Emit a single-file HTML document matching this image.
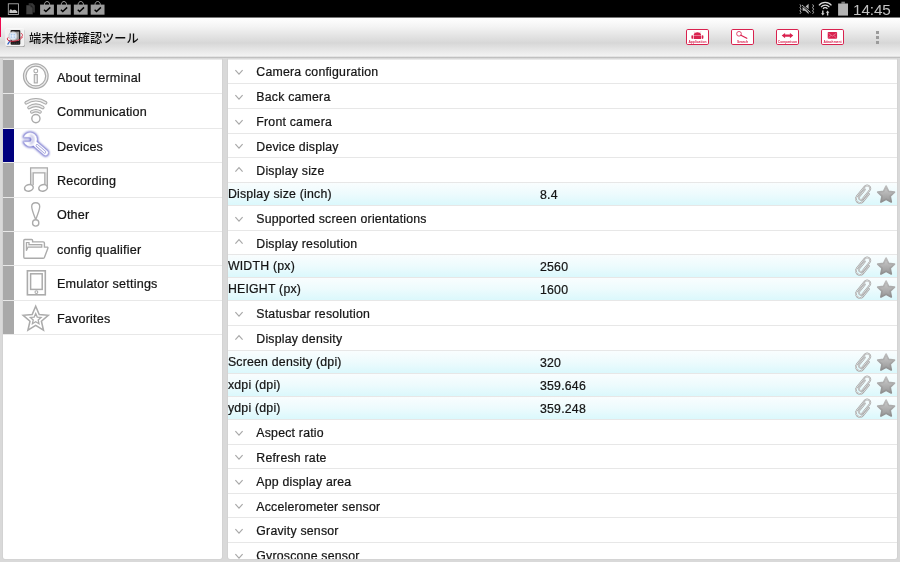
<!DOCTYPE html>
<html lang="ja"><head><meta charset="utf-8"><title>端末仕様確認ツール</title>
<style>
html,body{margin:0;padding:0}
body{width:900px;height:562px;position:relative;overflow:hidden;background:#d9d9d9;
 font-family:"Liberation Sans","Noto Sans CJK JP",sans-serif;color:#111}
#wrap{position:absolute;left:0;top:0;width:900px;height:562px;will-change:transform;overflow:hidden}
.abs{position:absolute}
.lrow .txt,.grow .txt,.drow .txt,.drow .val{-webkit-text-stroke:0.22px #151515}
#status{left:0;top:0;width:900px;height:18px;background:linear-gradient(to bottom,#000 0,#000 17px,#777 17px,#777 18px)}
#abar{left:0;top:18px;width:900px;height:38.6px;
 background:linear-gradient(to bottom,#ffffff 0%,#f4f4f4 22%,#d7d7d7 64%,#e3e3e3 78%,#f5f5f5 100%)}
#abline{left:0;top:56px;width:900px;height:2px;
 background:linear-gradient(to bottom,#efefef 0%,#dcdcdc 40%,#bebebe 78%,#c4c4c4 100%)}
.cap{position:absolute;top:58px;height:2px;background:linear-gradient(to bottom,#d0d0d0,#f2f2f2)}
#redstripe{left:0;top:17.4px;width:1.2px;height:19.4px;background:#ee0a50}
#title{left:29.0px;top:30.3px;font-size:12.2px;line-height:18px;color:#0c0c0c;white-space:nowrap;font-weight:500}
#clock{left:853.1px;top:1px;font-size:15.3px;line-height:17px;color:#c2c2c2;white-space:nowrap;letter-spacing:-0.15px}
#left{left:3px;top:59.4px;width:219.4px;height:499.4px;background:#fff;border-radius:0 0 2px 2px;overflow:hidden;box-shadow:0 0 0 0.6px #cfcfcf}
#right{left:227.8px;top:59.2px;width:669.6px;height:499.6px;background:#fff;border-radius:0 0 2px 2px;overflow:hidden;box-shadow:0 0 0 0.6px #cfcfcf}
.lrow{position:absolute;left:0;width:219.4px;height:34.4px}
.lrow .bar{position:absolute;left:0;top:0;width:10.9px;height:34.6px;background:#a9a9a9}
.lrow.sel .bar{background:#00007e}
.ldiv{position:absolute;left:0;width:219.4px;height:1px;background:#e8e8e8}
.lrow .txt{position:absolute;left:53.9px;top:9.5px;font-size:12.6px;line-height:18px;letter-spacing:0.2px;white-space:nowrap;color:#151515}
.grow{position:absolute;left:0;width:669.6px}
.rdiv{position:absolute;left:0;width:669.6px;height:1px;background:#e7e7e7}
.grow .txt{position:absolute;left:28.5px;font-size:12.3px;line-height:18px;letter-spacing:0.22px;white-space:nowrap;color:#151515}
.drow{position:absolute;left:0;width:669.6px;background:linear-gradient(to bottom,#f9fdfe 0%,#edfbfd 50%,#dbf8fc 100%)}
.drow .txt{position:absolute;left:0.1px;font-size:12.3px;line-height:18px;letter-spacing:0.22px;white-space:nowrap;color:#151515}
.drow .val{position:absolute;left:312.2px;font-size:12.3px;line-height:18px;letter-spacing:0.22px;white-space:nowrap;color:#151515}
.ibox{position:absolute;top:29.2px;width:20.9px;height:13.7px;border:1px solid #d9224f;border-radius:1.8px;background:#fff}
.ibox .t{position:absolute;left:-4px;right:-4px;top:9.7px;text-align:center;font-size:3.3px;line-height:4px;font-weight:bold;color:#d9224f;white-space:nowrap}
svg{position:absolute;overflow:visible}
</style></head>
<body><div id="wrap">
<div id="status" class="abs"></div>
<svg class="abs" style="left:0;top:0" width="900" height="18" viewBox="0 0 900 18"><rect x="8.3" y="3.8" width="10.2" height="10.7" fill="#000" stroke="#b4b4b4" stroke-width="0.85"/><path d="M9.4 12.9 L9.4 10.8 L10.8 9 L11.8 10 L12.6 10.6 L14 9.8 L15.6 10 L17.3 11.4 L17.3 12.9 Z" fill="#c4c4c4"/><path d="M28.7 3.2 L32.6 3.2 L34.8 5.4 L34.8 12.4 L28.7 12.4 Z" fill="#383838"/><path d="M26.1 5.1 L30.6 5.1 L32.9 7.3 L32.9 14.6 L26.1 14.6 Z" fill="#444" stroke="#000" stroke-width="0.4"/><path d="M30.6 5.1 L30.6 7.3 L32.9 7.3 Z" fill="#222"/><rect x="40.10" y="4.6" width="13.8" height="10.1" fill="#9c9c9c"/><path d="M44.40 4.8 C44.40 0.4 49.70 0.4 49.70 4.8" fill="none" stroke="#c9c9c9" stroke-width="0.8"/><path d="M44.00 9.7 L45.90 11.5 L50.30 7.4" fill="none" stroke="#000" stroke-width="1.45"/><rect x="56.97" y="4.6" width="13.8" height="10.1" fill="#9c9c9c"/><path d="M61.27 4.8 C61.27 0.4 66.57 0.4 66.57 4.8" fill="none" stroke="#c9c9c9" stroke-width="0.8"/><path d="M60.87 9.7 L62.77 11.5 L67.17 7.4" fill="none" stroke="#000" stroke-width="1.45"/><rect x="73.84" y="4.6" width="13.8" height="10.1" fill="#9c9c9c"/><path d="M78.14 4.8 C78.14 0.4 83.44 0.4 83.44 4.8" fill="none" stroke="#c9c9c9" stroke-width="0.8"/><path d="M77.74 9.7 L79.64 11.5 L84.04 7.4" fill="none" stroke="#000" stroke-width="1.45"/><rect x="90.71" y="4.6" width="13.8" height="10.1" fill="#9c9c9c"/><path d="M95.01 4.8 C95.01 0.4 100.31 0.4 100.31 4.8" fill="none" stroke="#c9c9c9" stroke-width="0.8"/><path d="M94.61 9.7 L96.51 11.5 L100.91 7.4" fill="none" stroke="#000" stroke-width="1.45"/><path d="M802.6 7 L805 7 L808.6 3.8 L808.6 14 L805 10.8 L802.6 10.8 Z" fill="#b9b9b9"/><path d="M801.8 4.6 L811 12.6" stroke="#000" stroke-width="2.2"/><path d="M802 5 L810.6 12.4" stroke="#c4c4c4" stroke-width="0.9"/><path d="M800 4.4 L801 6 L800 7.6 L801 9.2 L800 10.8 L801 12.4 L800 13.8" fill="none" stroke="#c2c2c2" stroke-width="0.9"/><path d="M812.6 4.4 L813.6 6 L812.6 7.6 L813.6 9.2 L812.6 10.8 L813.6 12.4 L812.6 13.8" fill="none" stroke="#c2c2c2" stroke-width="0.9"/><path d="M818.92 5.33 A8.2 8.2 0 0 1 831.48 5.33" fill="none" stroke="#dcdcdc" stroke-width="1.25"/><path d="M820.99 7.06 A5.5 5.5 0 0 1 829.41 7.06" fill="none" stroke="#dcdcdc" stroke-width="1.2"/><path d="M822.98 8.74 A2.9 2.9 0 0 1 827.42 8.74" fill="none" stroke="#dcdcdc" stroke-width="1.2"/><path d="M822.1 10.6 L823.5 10.6 L823.5 13.2 L824.6 13.2 L822.8 15.6 L821 13.2 L822.1 13.2 Z" fill="#cfcfcf"/><path d="M826.9 15.4 L828.3 15.4 L828.3 12.8 L829.4 12.8 L827.6 10.4 L825.8 12.8 L826.9 12.8 Z" fill="#cfcfcf"/><rect x="841.4" y="1.7" width="3.5" height="2" fill="#7d7d7d"/><rect x="838.1" y="3.5" width="9.9" height="12.1" fill="#b3b3b3"/></svg>
<div id="clock" class="abs">14:45</div>
<div id="abar" class="abs"></div><div id="abline" class="abs"></div><div id="redstripe" class="abs"></div>
<svg class="abs" style="left:0;top:20px" width="30" height="32" viewBox="0 20 30 32"><defs><filter id="sh" x="-20%" y="-20%" width="140%" height="150%"><feGaussianBlur stdDeviation="0.55"/></filter></defs><rect x="6.2" y="29.3" width="18.5" height="17.8" rx="1.6" fill="#8e8e8e" filter="url(#sh)"/><rect x="5.8" y="28.4" width="18.4" height="17.7" rx="1.6" fill="#f1f1f1" stroke="#fdfdfd" stroke-width="0.6"/><rect x="10.6" y="30" width="9.7" height="14.8" rx="1.1" fill="#1b1b1b"/><rect x="11.8" y="31.6" width="7.3" height="9.4" fill="#9a9a9a"/><path d="M12 43.2 L19 43.2" stroke="#555" stroke-width="0.6" stroke-dasharray="1.4 0.6"/><path d="M20.4 37.4 C23.2 36.8 23 33.6 20.8 33.3" fill="none" stroke="#d4203a" stroke-width="0.85"/><circle cx="12.9" cy="35.9" r="4" fill="#dbe8f6" stroke="#cdcdcd" stroke-width="1.05"/><path d="M10.9 34.2 L14.9 37.6 M14.9 34.2 L10.9 37.6" stroke="#a9c7ec" stroke-width="1.1"/><circle cx="12.9" cy="35.9" r="1" fill="#f4f8fc"/><path d="M10.3 40.4 L7.6 44.5" stroke="#2a5cc0" stroke-width="1.3"/><path d="M8.2 37.4 C5.8 39.3 8.4 41.7 13.4 41.3 C17.6 40.9 21.8 39.1 22.4 36.8" fill="none" stroke="#d4203a" stroke-width="0.95"/></svg><svg class="abs" width="0" height="0" style="left:0;top:0"><defs><linearGradient id="sg" x1="0" y1="0" x2="0" y2="1"><stop offset="0" stop-color="#cdcdcd"/><stop offset="1" stop-color="#969696"/></linearGradient><linearGradient id="sg2" x1="0" y1="0" x2="0" y2="1"><stop offset="0" stop-color="#bdbdbd"/><stop offset="1" stop-color="#8e8e8e"/></linearGradient></defs></svg>
<div id="title" class="abs">端末仕様確認ツール</div>
<div class="ibox" style="left:686.0px"><svg style="left:0;top:0" width="22" height="15" viewBox="0.5 0.3 22 15"><path d="M7.2 5.2 C7.2 1.6 14.6 1.6 14.6 5.2 Z" fill="#d9224f"/><path d="M8.3 2.9 L7.6 2 M13.5 2.9 L14.2 2" stroke="#d9224f" stroke-width="0.5"/><rect x="7.2" y="5.7" width="7.4" height="3.6" fill="#d9224f"/><rect x="4.9" y="5.6" width="1.7" height="3.6" rx="0.8" fill="#d9224f"/><rect x="15.2" y="5.6" width="1.7" height="3.6" rx="0.8" fill="#d9224f"/></svg><div class="t">Application</div></div><div class="ibox" style="left:731.0px"><svg style="left:0;top:0" width="22" height="15" viewBox="0.5 0.3 22 15"><circle cx="7.5" cy="4.1" r="2.35" fill="none" stroke="#d9224f" stroke-width="0.8"/><path d="M9.4 5.5 L15.3 8.6" stroke="#d9224f" stroke-width="1.25" stroke-linecap="round"/></svg><div class="t">Search</div></div><div class="ibox" style="left:776.0px"><svg style="left:0;top:0" width="22" height="15" viewBox="0.5 0.3 22 15"><path d="M5.2 5.9 L8.6 3.3 L8.6 4.8 L13.4 4.8 L13.4 3.3 L16.8 5.9 L13.4 8.5 L13.4 7 L8.6 7 L8.6 8.5 Z" fill="#d9224f"/></svg><div class="t">Comparison</div></div><div class="ibox" style="left:821.0px"><svg style="left:0;top:0" width="22" height="15" viewBox="0.5 0.3 22 15"><rect x="6.2" y="2.2" width="9.4" height="6.8" rx="0.9" fill="#d9224f"/><path d="M7 3.6 L10.9 6.4 L14.8 3.6 M7 8 L9.6 5.7 M14.8 8 L12.2 5.7" fill="none" stroke="#f6c9d3" stroke-width="0.45"/></svg><div class="t">Attachment</div></div><div class="abs" style="left:875.8px;top:30.5px;width:3.3px;height:3.1px;background:#9b9b9b"></div><div class="abs" style="left:875.8px;top:35.7px;width:3.3px;height:3.1px;background:#9b9b9b"></div><div class="abs" style="left:875.8px;top:40.9px;width:3.3px;height:3.1px;background:#9b9b9b"></div>
<div id="left" class="abs">
<div class="lrow" style="top:0.00px"><div class="bar"></div><div class="txt">About terminal</div></div>
<div class="lrow" style="top:34.40px"><div class="bar"></div><div class="txt">Communication</div></div>
<div class="lrow sel" style="top:68.80px"><div class="bar"></div><div class="txt">Devices</div></div>
<div class="lrow" style="top:103.20px"><div class="bar"></div><div class="txt">Recording</div></div>
<div class="lrow" style="top:137.60px"><div class="bar"></div><div class="txt">Other</div></div>
<div class="lrow" style="top:172.00px"><div class="bar"></div><div class="txt">config qualifier</div></div>
<div class="lrow" style="top:206.40px"><div class="bar"></div><div class="txt">Emulator settings</div></div>
<div class="lrow" style="top:240.80px"><div class="bar"></div><div class="txt">Favorites</div></div>
<div class="ldiv" style="top:33.6px"></div>
<div class="ldiv" style="top:68.6px"></div>
<div class="ldiv" style="top:102.6px"></div>
<div class="ldiv" style="top:137.6px"></div>
<div class="ldiv" style="top:171.6px"></div>
<div class="ldiv" style="top:205.6px"></div>
<div class="ldiv" style="top:240.6px"></div>
<div class="ldiv" style="top:274.6px"></div>
<svg class="abs" style="left:0;top:0" width="219" height="300" viewBox="3.0 59.4 219 300"><defs><filter id="glow" x="-30%" y="-30%" width="160%" height="160%"><feGaussianBlur stdDeviation="1.15"/></filter><filter id="glow2" x="-50%" y="-50%" width="200%" height="200%"><feGaussianBlur stdDeviation="0.9"/></filter></defs><circle cx="35.8" cy="76.5" r="12.3" fill="#ededed" stroke="#ababab" stroke-width="1.25"/><circle cx="35.8" cy="76.5" r="9.9" fill="#fff" stroke="#ababab" stroke-width="1.25"/><circle cx="35.8" cy="71.3" r="1.9" fill="#fff" stroke="#ababab" stroke-width="1.15"/><rect x="34.3" y="75" width="3" height="8.3" fill="#eee" stroke="#ababab" stroke-width="1.15"/><path d="M26.21 103.21 A16.9 16.9 0 0 1 45.59 103.21" fill="none" stroke="#ababab" stroke-width="3.7" stroke-linecap="round"/><path d="M26.21 103.21 A16.9 16.9 0 0 1 45.59 103.21" fill="none" stroke="#ededed" stroke-width="1.5" stroke-linecap="round"/><path d="M29.04 107.88 A12.6 12.6 0 0 1 42.76 107.88" fill="none" stroke="#ababab" stroke-width="3.7" stroke-linecap="round"/><path d="M29.04 107.88 A12.6 12.6 0 0 1 42.76 107.88" fill="none" stroke="#ededed" stroke-width="1.5" stroke-linecap="round"/><path d="M31.73 112.31 A8.1 8.1 0 0 1 40.07 112.31" fill="none" stroke="#ababab" stroke-width="3.5" stroke-linecap="round"/><path d="M31.73 112.31 A8.1 8.1 0 0 1 40.07 112.31" fill="none" stroke="#ededed" stroke-width="1.4" stroke-linecap="round"/><circle cx="35.9" cy="119.0" r="4.1" fill="#fff" stroke="#ababab" stroke-width="1.4"/><path d="M23.69 137.60 A6.9 6.9 0 1 1 36.73 142.13 L47.23 151.26 A2.6 2.6 0 0 1 43.81 155.18 L33.32 146.06 A6.9 6.9 0 0 1 23.69 142.20 L29.2 142.20 A2.3 2.3 0 0 0 29.2 137.60 Z" fill="#5656c2" stroke="#5656c2" stroke-width="2.2" stroke-linejoin="round" filter="url(#glow)" opacity="0.95"/><path d="M23.69 137.60 A6.9 6.9 0 1 1 36.73 142.13 L47.23 151.26 A2.6 2.6 0 0 1 43.81 155.18 L33.32 146.06 A6.9 6.9 0 0 1 23.69 142.20 L29.2 142.20 A2.3 2.3 0 0 0 29.2 137.60 Z" fill="#fff" stroke="#c3c3ea" stroke-width="0.5"/><path d="M29.80 135.60 A4.4 4.4 0 0 1 29.80 144.20" fill="none" stroke="#8080cc" stroke-width="2.2" filter="url(#glow2)" opacity="0.5"/><path d="M37.14 145.94 L44.69 152.50" stroke="#9a9ad8" stroke-width="2.9" stroke-linecap="round"/><path d="M37.14 145.94 L44.69 152.50" stroke="#fff" stroke-width="1.5" stroke-linecap="round"/><path d="M30.9 168.7 L47.1 168.7 L47.1 186 L45.2 186 L45.2 172.9 L32.8 172.9 L32.8 186 L30.9 186 Z" fill="#e2e2e2"/><rect x="31" y="168.8" width="16" height="4" fill="#f6f6f6"/><path d="M30.6 186.4 L30.6 168.4 L47.4 168.4 L47.4 187" fill="none" stroke="#ababab" stroke-width="1.25"/><path d="M33.2 185.6 L33.2 173.4 L44.8 173.4 L44.8 185.6" fill="none" stroke="#ababab" stroke-width="1.25"/><ellipse cx="28.9" cy="188.3" rx="4.4" ry="3.2" fill="#fff" stroke="#ababab" stroke-width="1.5" transform="rotate(-14 28.9 188.3)"/><ellipse cx="43.1" cy="188.3" rx="4.4" ry="3.2" fill="#fff" stroke="#ababab" stroke-width="1.5" transform="rotate(-14 43.1 188.3)"/><path d="M35.7 220 C33.6 214.6 31.7 210.2 31.7 207 C31.7 204.4 33.4 203.1 35.7 203.1 C38 203.1 39.7 204.4 39.7 207 C39.7 210.2 37.8 214.6 35.7 220 Z" fill="#fff" stroke="#ababab" stroke-width="1.35"/><circle cx="35.7" cy="223.3" r="3.15" fill="#fff" stroke="#ababab" stroke-width="1.35"/><g transform="translate(0 0.5)"><path d="M23.8 257 L23.8 240.4 Q23.8 239.4 24.8 239.4 L31.6 239.4 Q32.6 239.4 32.6 240.4 L32.6 241.8 L43.2 241.8 Q44.4 241.8 44.4 243 L44.4 247 L47.6 247 Q48.2 247.4 47.8 248.4 L44.4 257.4 Q44 258.2 43 258.2 L24.8 258.2 Q23.8 258.2 23.8 257 Z" fill="#fff" stroke="#ababab" stroke-width="1.4"/><path d="M26.4 250.6 L26.4 242.4 L29 242.4 L29 244.6 L41.8 244.6 L41.8 247 L28 247 Z" fill="#f2f2f2" stroke="#ababab" stroke-width="1.2"/></g><rect x="27.4" y="271.2" width="17.9" height="24" fill="#fff" stroke="#ababab" stroke-width="1.6"/><rect x="30.6" y="274.2" width="11.6" height="15.6" fill="#fff" stroke="#ababab" stroke-width="1.5"/><circle cx="36.4" cy="292.5" r="1.4" fill="#fff" stroke="#ababab" stroke-width="1.1"/><polygon points="35.70,306.60 39.23,314.95 48.25,315.72 41.41,321.65 43.46,330.48 35.70,325.80 27.94,330.48 29.99,321.65 23.15,315.72 32.17,314.95" fill="#fff" stroke="#ababab" stroke-width="1.55"/><polygon points="35.70,314.00 37.23,317.50 41.03,317.87 38.17,320.40 38.99,324.13 35.70,322.20 32.41,324.13 33.23,320.40 30.37,317.87 34.17,317.50" fill="#fff" stroke="#ababab" stroke-width="1.3"/></svg>
</div>
<div id="right" class="abs">
<div class="grow" style="top:0.00px;height:23.80px"><svg style="left:7.3px;top:12.75px" width="8" height="1"><path d="M0.4 -1.9 L4 2.1 L7.6 -1.9" fill="none" stroke="#a9a9a9" stroke-width="1.2"/></svg><div class="txt" style="top:3.95px">Camera configuration</div></div>
<div class="grow" style="top:24.80px;height:24.00px"><svg style="left:7.3px;top:12.85px" width="8" height="1"><path d="M0.4 -1.9 L4 2.1 L7.6 -1.9" fill="none" stroke="#a9a9a9" stroke-width="1.2"/></svg><div class="txt" style="top:4.05px">Back camera</div></div>
<div class="rdiv" style="top:23.80px"></div>
<div class="grow" style="top:49.80px;height:24.00px"><svg style="left:7.3px;top:12.85px" width="8" height="1"><path d="M0.4 -1.9 L4 2.1 L7.6 -1.9" fill="none" stroke="#a9a9a9" stroke-width="1.2"/></svg><div class="txt" style="top:4.05px">Front camera</div></div>
<div class="rdiv" style="top:48.80px"></div>
<div class="grow" style="top:74.80px;height:23.00px"><svg style="left:7.3px;top:12.35px" width="8" height="1"><path d="M0.4 -1.9 L4 2.1 L7.6 -1.9" fill="none" stroke="#a9a9a9" stroke-width="1.2"/></svg><div class="txt" style="top:3.55px">Device display</div></div>
<div class="rdiv" style="top:73.80px"></div>
<div class="grow" style="top:98.80px;height:24.00px"><svg style="left:7.3px;top:12.85px" width="8" height="1"><path d="M0.4 0.7 L4 -3.3 L7.6 0.7" fill="none" stroke="#a9a9a9" stroke-width="1.2"/></svg><div class="txt" style="top:4.05px">Display size</div></div>
<div class="rdiv" style="top:97.80px"></div>
<div class="drow" style="top:123.80px;height:22.00px"><div class="txt" style="top:1.85px">Display size (inch)</div><div class="val" style="top:3.35px">8.4</div><svg style="left:624.20px;top:0" width="46" height="22.00" viewBox="852 0 46 22.00"><g transform="translate(863.7 11.20) rotate(-51)"><path d="M3.6 4 L-6 4 A4 4 0 0 1 -6 -4 L6.5 -4 A3.1 3.1 0 0 1 6.5 2.2 L-4.5 2.2 A2.1 2.1 0 0 1 -4.5 -2 L4.5 -2" fill="none" stroke="#9c9c9c" stroke-width="1.7" stroke-linecap="round"/><path d="M3.6 4 L-6 4 A4 4 0 0 1 -6 -4 L6.5 -4 A3.1 3.1 0 0 1 6.5 2.2 L-4.5 2.2 A2.1 2.1 0 0 1 -4.5 -2 L4.5 -2" fill="none" stroke="#f4f4f4" stroke-width="0.65" stroke-linecap="round"/></g><polygon points="886.10,3.10 888.63,8.42 894.47,9.18 890.19,13.23 891.27,19.02 886.10,16.20 880.93,19.02 882.01,13.23 877.73,9.18 883.57,8.42" fill="url(#sg)" stroke="url(#sg2)" stroke-width="1.7" stroke-linejoin="round"/></svg></div>
<div class="rdiv" style="top:122.80px"></div>
<div class="grow" style="top:146.80px;height:24.00px"><svg style="left:7.3px;top:12.85px" width="8" height="1"><path d="M0.4 -1.9 L4 2.1 L7.6 -1.9" fill="none" stroke="#a9a9a9" stroke-width="1.2"/></svg><div class="txt" style="top:4.05px">Supported screen orientations</div></div>
<div class="rdiv" style="top:145.80px"></div>
<div class="grow" style="top:171.80px;height:23.00px"><svg style="left:7.3px;top:12.35px" width="8" height="1"><path d="M0.4 0.7 L4 -3.3 L7.6 0.7" fill="none" stroke="#a9a9a9" stroke-width="1.2"/></svg><div class="txt" style="top:3.55px">Display resolution</div></div>
<div class="rdiv" style="top:170.80px"></div>
<div class="drow" style="top:195.80px;height:22.00px"><div class="txt" style="top:1.85px">WIDTH (px)</div><div class="val" style="top:3.35px">2560</div><svg style="left:624.20px;top:0" width="46" height="22.00" viewBox="852 0 46 22.00"><g transform="translate(863.7 11.20) rotate(-51)"><path d="M3.6 4 L-6 4 A4 4 0 0 1 -6 -4 L6.5 -4 A3.1 3.1 0 0 1 6.5 2.2 L-4.5 2.2 A2.1 2.1 0 0 1 -4.5 -2 L4.5 -2" fill="none" stroke="#9c9c9c" stroke-width="1.7" stroke-linecap="round"/><path d="M3.6 4 L-6 4 A4 4 0 0 1 -6 -4 L6.5 -4 A3.1 3.1 0 0 1 6.5 2.2 L-4.5 2.2 A2.1 2.1 0 0 1 -4.5 -2 L4.5 -2" fill="none" stroke="#f4f4f4" stroke-width="0.65" stroke-linecap="round"/></g><polygon points="886.10,3.10 888.63,8.42 894.47,9.18 890.19,13.23 891.27,19.02 886.10,16.20 880.93,19.02 882.01,13.23 877.73,9.18 883.57,8.42" fill="url(#sg)" stroke="url(#sg2)" stroke-width="1.7" stroke-linejoin="round"/></svg></div>
<div class="rdiv" style="top:194.80px"></div>
<div class="drow" style="top:218.80px;height:22.00px"><div class="txt" style="top:1.85px">HEIGHT (px)</div><div class="val" style="top:3.35px">1600</div><svg style="left:624.20px;top:0" width="46" height="22.00" viewBox="852 0 46 22.00"><g transform="translate(863.7 11.20) rotate(-51)"><path d="M3.6 4 L-6 4 A4 4 0 0 1 -6 -4 L6.5 -4 A3.1 3.1 0 0 1 6.5 2.2 L-4.5 2.2 A2.1 2.1 0 0 1 -4.5 -2 L4.5 -2" fill="none" stroke="#9c9c9c" stroke-width="1.7" stroke-linecap="round"/><path d="M3.6 4 L-6 4 A4 4 0 0 1 -6 -4 L6.5 -4 A3.1 3.1 0 0 1 6.5 2.2 L-4.5 2.2 A2.1 2.1 0 0 1 -4.5 -2 L4.5 -2" fill="none" stroke="#f4f4f4" stroke-width="0.65" stroke-linecap="round"/></g><polygon points="886.10,3.10 888.63,8.42 894.47,9.18 890.19,13.23 891.27,19.02 886.10,16.20 880.93,19.02 882.01,13.23 877.73,9.18 883.57,8.42" fill="url(#sg)" stroke="url(#sg2)" stroke-width="1.7" stroke-linejoin="round"/></svg></div>
<div class="rdiv" style="top:217.80px"></div>
<div class="grow" style="top:241.80px;height:24.00px"><svg style="left:7.3px;top:12.85px" width="8" height="1"><path d="M0.4 -1.9 L4 2.1 L7.6 -1.9" fill="none" stroke="#a9a9a9" stroke-width="1.2"/></svg><div class="txt" style="top:4.05px">Statusbar resolution</div></div>
<div class="rdiv" style="top:240.80px"></div>
<div class="grow" style="top:266.80px;height:24.00px"><svg style="left:7.3px;top:12.85px" width="8" height="1"><path d="M0.4 0.7 L4 -3.3 L7.6 0.7" fill="none" stroke="#a9a9a9" stroke-width="1.2"/></svg><div class="txt" style="top:4.05px">Display density</div></div>
<div class="rdiv" style="top:265.80px"></div>
<div class="drow" style="top:291.80px;height:22.00px"><div class="txt" style="top:1.85px">Screen density (dpi)</div><div class="val" style="top:3.35px">320</div><svg style="left:624.20px;top:0" width="46" height="22.00" viewBox="852 0 46 22.00"><g transform="translate(863.7 11.20) rotate(-51)"><path d="M3.6 4 L-6 4 A4 4 0 0 1 -6 -4 L6.5 -4 A3.1 3.1 0 0 1 6.5 2.2 L-4.5 2.2 A2.1 2.1 0 0 1 -4.5 -2 L4.5 -2" fill="none" stroke="#9c9c9c" stroke-width="1.7" stroke-linecap="round"/><path d="M3.6 4 L-6 4 A4 4 0 0 1 -6 -4 L6.5 -4 A3.1 3.1 0 0 1 6.5 2.2 L-4.5 2.2 A2.1 2.1 0 0 1 -4.5 -2 L4.5 -2" fill="none" stroke="#f4f4f4" stroke-width="0.65" stroke-linecap="round"/></g><polygon points="886.10,3.10 888.63,8.42 894.47,9.18 890.19,13.23 891.27,19.02 886.10,16.20 880.93,19.02 882.01,13.23 877.73,9.18 883.57,8.42" fill="url(#sg)" stroke="url(#sg2)" stroke-width="1.7" stroke-linejoin="round"/></svg></div>
<div class="rdiv" style="top:290.80px"></div>
<div class="drow" style="top:314.80px;height:22.00px"><div class="txt" style="top:1.85px">xdpi (dpi)</div><div class="val" style="top:3.35px">359.646</div><svg style="left:624.20px;top:0" width="46" height="22.00" viewBox="852 0 46 22.00"><g transform="translate(863.7 11.20) rotate(-51)"><path d="M3.6 4 L-6 4 A4 4 0 0 1 -6 -4 L6.5 -4 A3.1 3.1 0 0 1 6.5 2.2 L-4.5 2.2 A2.1 2.1 0 0 1 -4.5 -2 L4.5 -2" fill="none" stroke="#9c9c9c" stroke-width="1.7" stroke-linecap="round"/><path d="M3.6 4 L-6 4 A4 4 0 0 1 -6 -4 L6.5 -4 A3.1 3.1 0 0 1 6.5 2.2 L-4.5 2.2 A2.1 2.1 0 0 1 -4.5 -2 L4.5 -2" fill="none" stroke="#f4f4f4" stroke-width="0.65" stroke-linecap="round"/></g><polygon points="886.10,3.10 888.63,8.42 894.47,9.18 890.19,13.23 891.27,19.02 886.10,16.20 880.93,19.02 882.01,13.23 877.73,9.18 883.57,8.42" fill="url(#sg)" stroke="url(#sg2)" stroke-width="1.7" stroke-linejoin="round"/></svg></div>
<div class="rdiv" style="top:313.80px"></div>
<div class="drow" style="top:337.80px;height:22.00px"><div class="txt" style="top:1.85px">ydpi (dpi)</div><div class="val" style="top:3.35px">359.248</div><svg style="left:624.20px;top:0" width="46" height="22.00" viewBox="852 0 46 22.00"><g transform="translate(863.7 11.20) rotate(-51)"><path d="M3.6 4 L-6 4 A4 4 0 0 1 -6 -4 L6.5 -4 A3.1 3.1 0 0 1 6.5 2.2 L-4.5 2.2 A2.1 2.1 0 0 1 -4.5 -2 L4.5 -2" fill="none" stroke="#9c9c9c" stroke-width="1.7" stroke-linecap="round"/><path d="M3.6 4 L-6 4 A4 4 0 0 1 -6 -4 L6.5 -4 A3.1 3.1 0 0 1 6.5 2.2 L-4.5 2.2 A2.1 2.1 0 0 1 -4.5 -2 L4.5 -2" fill="none" stroke="#f4f4f4" stroke-width="0.65" stroke-linecap="round"/></g><polygon points="886.10,3.10 888.63,8.42 894.47,9.18 890.19,13.23 891.27,19.02 886.10,16.20 880.93,19.02 882.01,13.23 877.73,9.18 883.57,8.42" fill="url(#sg)" stroke="url(#sg2)" stroke-width="1.7" stroke-linejoin="round"/></svg></div>
<div class="rdiv" style="top:336.80px"></div>
<div class="grow" style="top:360.80px;height:24.00px"><svg style="left:7.3px;top:12.85px" width="8" height="1"><path d="M0.4 -1.9 L4 2.1 L7.6 -1.9" fill="none" stroke="#a9a9a9" stroke-width="1.2"/></svg><div class="txt" style="top:4.05px">Aspect ratio</div></div>
<div class="rdiv" style="top:359.80px"></div>
<div class="grow" style="top:385.80px;height:23.00px"><svg style="left:7.3px;top:12.35px" width="8" height="1"><path d="M0.4 -1.9 L4 2.1 L7.6 -1.9" fill="none" stroke="#a9a9a9" stroke-width="1.2"/></svg><div class="txt" style="top:3.55px">Refresh rate</div></div>
<div class="rdiv" style="top:384.80px"></div>
<div class="grow" style="top:409.80px;height:24.00px"><svg style="left:7.3px;top:12.85px" width="8" height="1"><path d="M0.4 -1.9 L4 2.1 L7.6 -1.9" fill="none" stroke="#a9a9a9" stroke-width="1.2"/></svg><div class="txt" style="top:4.05px">App display area</div></div>
<div class="rdiv" style="top:408.80px"></div>
<div class="grow" style="top:434.80px;height:23.00px"><svg style="left:7.3px;top:12.35px" width="8" height="1"><path d="M0.4 -1.9 L4 2.1 L7.6 -1.9" fill="none" stroke="#a9a9a9" stroke-width="1.2"/></svg><div class="txt" style="top:3.55px">Accelerometer sensor</div></div>
<div class="rdiv" style="top:433.80px"></div>
<div class="grow" style="top:458.80px;height:24.00px"><svg style="left:7.3px;top:12.85px" width="8" height="1"><path d="M0.4 -1.9 L4 2.1 L7.6 -1.9" fill="none" stroke="#a9a9a9" stroke-width="1.2"/></svg><div class="txt" style="top:4.05px">Gravity sensor</div></div>
<div class="rdiv" style="top:457.80px"></div>
<div class="grow" style="top:483.80px;height:23.50px"><svg style="left:7.3px;top:12.60px" width="8" height="1"><path d="M0.4 -1.9 L4 2.1 L7.6 -1.9" fill="none" stroke="#a9a9a9" stroke-width="1.2"/></svg><div class="txt" style="top:3.80px">Gyroscope sensor</div></div>
<div class="rdiv" style="top:482.80px"></div>
</div>
<div class="cap" style="left:3px;width:219.4px"></div><div class="cap" style="left:227.8px;width:669.6px"></div>
</div></body></html>
